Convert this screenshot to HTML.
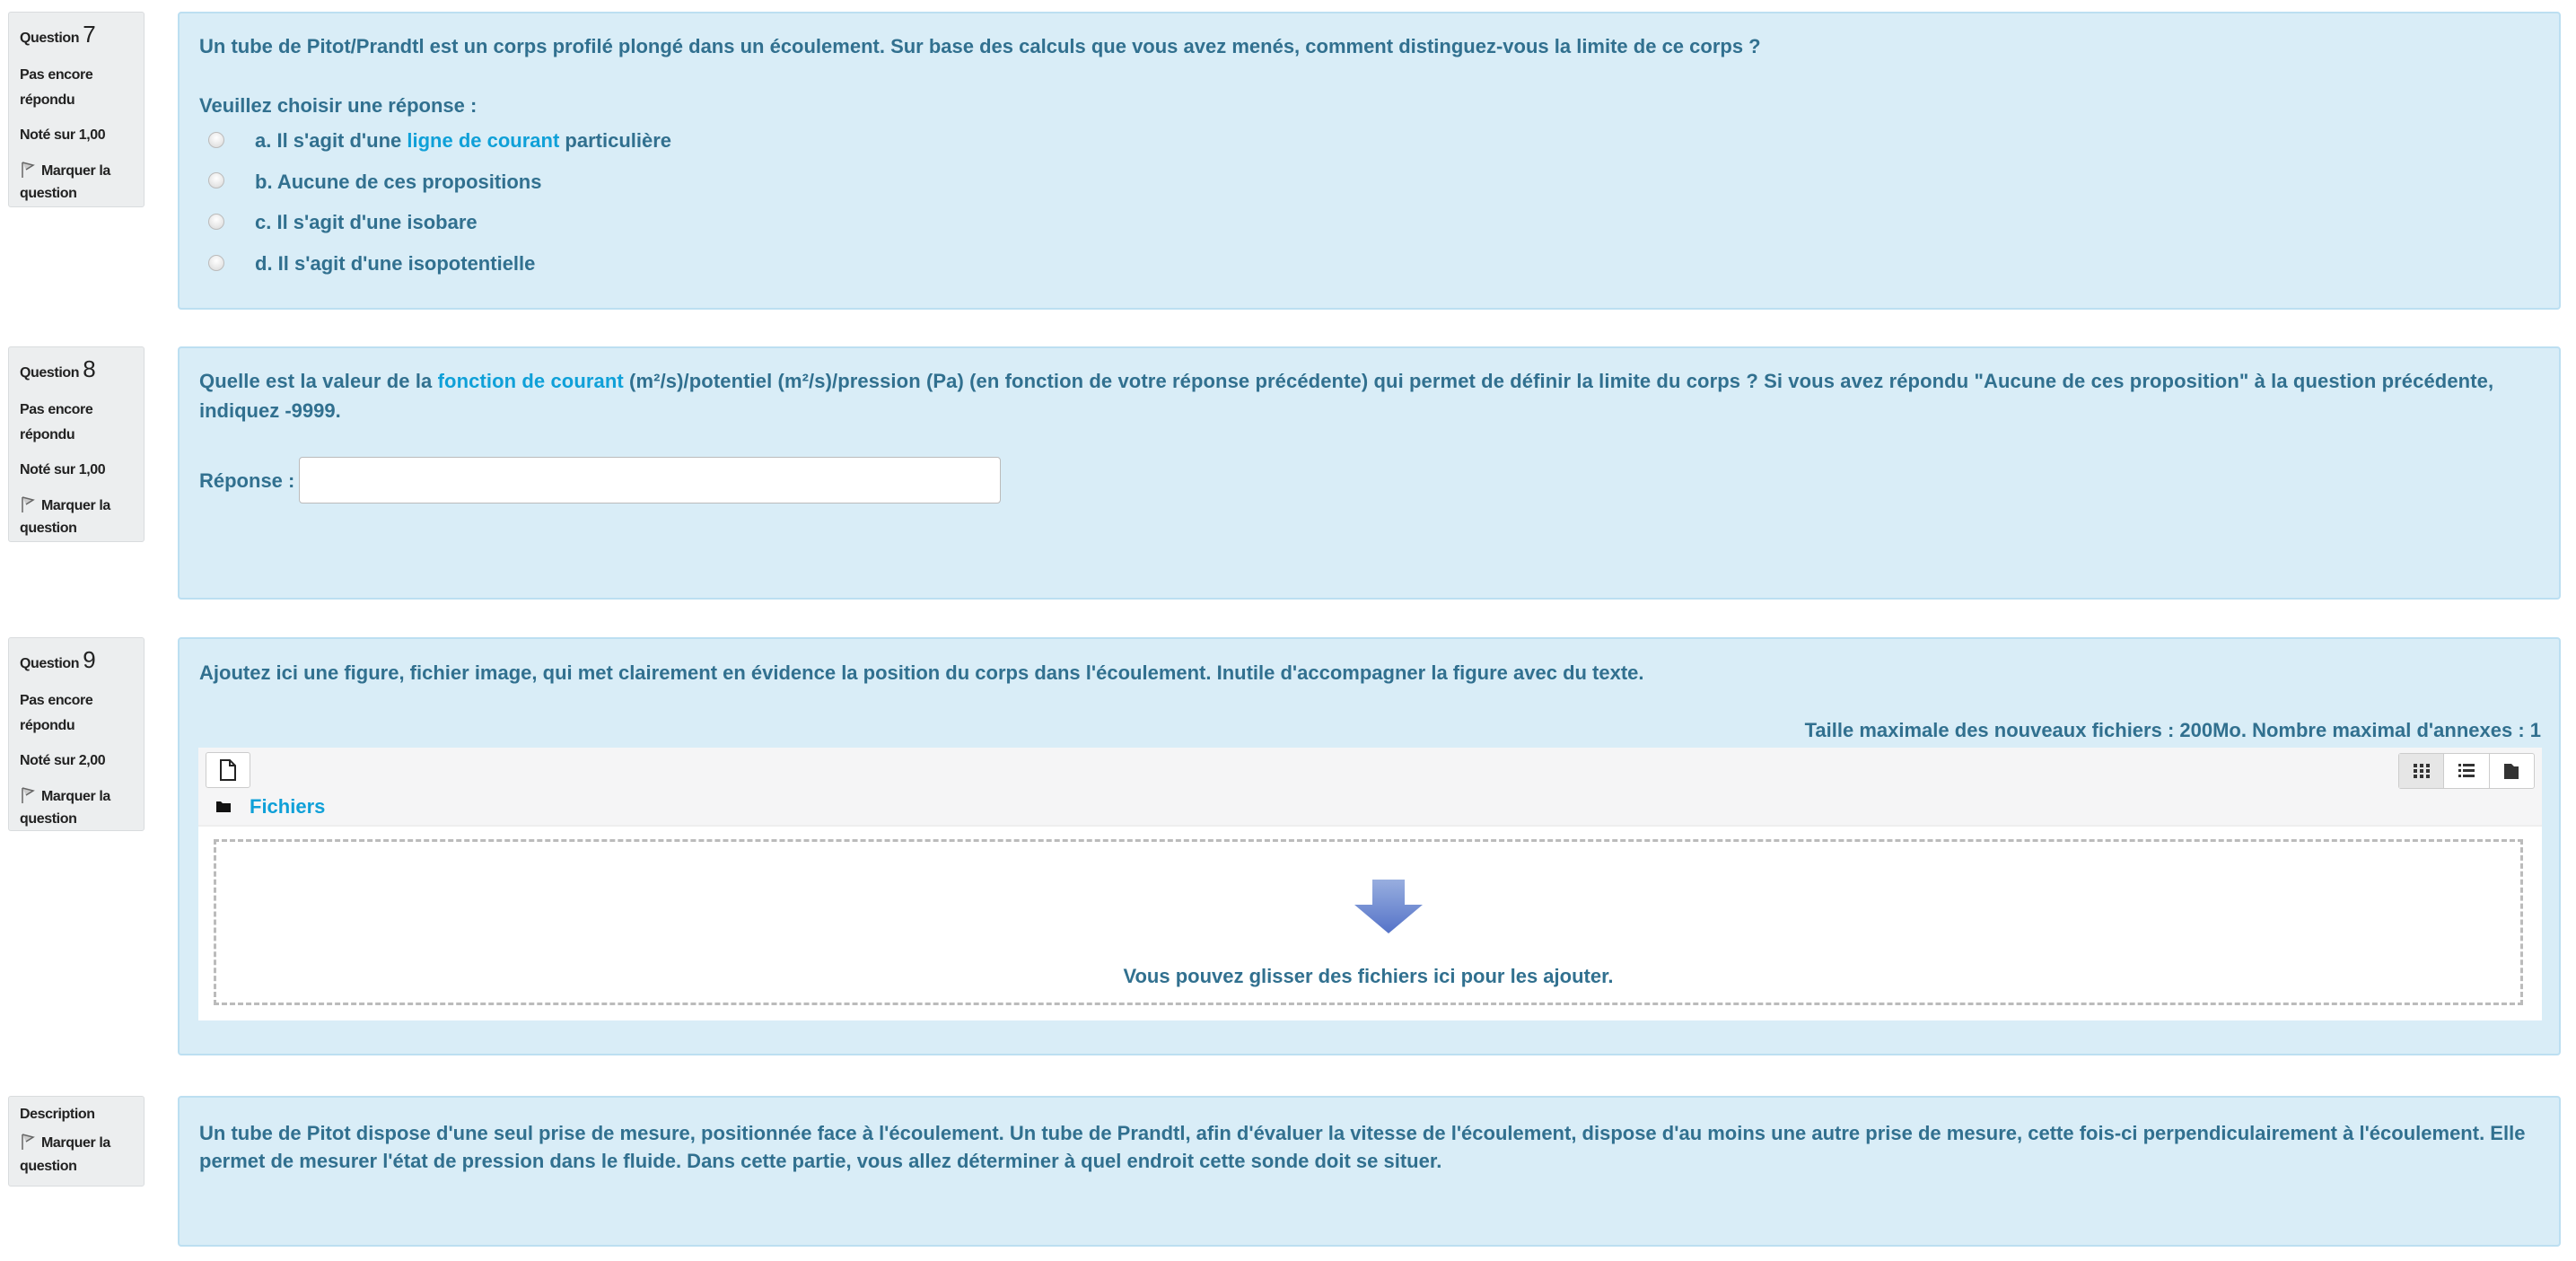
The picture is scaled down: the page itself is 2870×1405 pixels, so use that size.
<!DOCTYPE html>
<html><head><meta charset="utf-8"><style>
body{margin:0;width:2870px;height:1405px;background:#fff;font-family:"Liberation Sans",Arial,sans-serif;position:relative;overflow:hidden}
.info{position:absolute;left:9px;width:152px;background:#eceeef;border:1px solid #d9dcde;border-radius:3px;font-size:16px;font-weight:bold;color:#222;box-sizing:border-box;letter-spacing:-0.4px}
.info div{position:absolute;left:12px;white-space:nowrap;line-height:20px}
.info .n{font-size:26px;font-weight:normal}
.flag{display:inline-block;width:18px;height:20px;vertical-align:-4px;margin-right:6px}
.panel{position:absolute;left:198px;width:2655px;background:#d9edf7;border:2px solid #bcdff1;border-radius:4px;box-sizing:border-box;color:#31708f;font-weight:bold;font-size:22px}
.t{position:absolute;left:22px;white-space:nowrap}
a{color:#0fa0d8;text-decoration:none}
.radio{position:absolute;width:18px;height:18px;border-radius:50%;background:radial-gradient(circle at 50% 35%,#fff,#d8d8d8);border:1px solid #bbb;box-sizing:border-box}
</style></head><body>

<div class="info" style="top:13px;height:218px"><div style="top:14px">Question <span class="n">7</span></div><div style="top:60px">Pas encore</div><div style="top:88px">répondu</div><div style="top:127px">Noté sur 1,00</div><div style="top:165px"><svg class="flag" viewBox="0 0 18 20"><path d="M3 2v17M3 2l12 3-8 5" fill="#ccc" stroke="#666" stroke-width="1.5"/></svg>Marquer la</div><div style="top:192px">question</div></div>
<div class="panel" style="top:13px;height:332px">
<div class="t" style="top:24px">Un tube de Pitot/Prandtl est un corps profilé plongé dans un écoulement. Sur base des calculs que vous avez menés, comment distinguez-vous la limite de ce corps ?</div>
<div class="t" style="top:90px">Veuillez choisir une réponse :</div>
<div class="radio" style="left:32px;top:132px"></div><div class="t" style="left:84px;top:129px">a. Il s'agit d'une <a>ligne de courant</a> particulière</div>
<div class="radio" style="left:32px;top:177px"></div><div class="t" style="left:84px;top:175px">b. Aucune de ces propositions</div>
<div class="radio" style="left:32px;top:223px"></div><div class="t" style="left:84px;top:220px">c. Il s'agit d'une isobare</div>
<div class="radio" style="left:32px;top:269px"></div><div class="t" style="left:84px;top:266px">d. Il s'agit d'une isopotentielle</div>
</div>

<div class="info" style="top:386px;height:218px"><div style="top:14px">Question <span class="n">8</span></div><div style="top:60px">Pas encore</div><div style="top:88px">répondu</div><div style="top:127px">Noté sur 1,00</div><div style="top:165px"><svg class="flag" viewBox="0 0 18 20"><path d="M3 2v17M3 2l12 3-8 5" fill="#ccc" stroke="#666" stroke-width="1.5"/></svg>Marquer la</div><div style="top:192px">question</div></div>
<div class="panel" style="top:386px;height:282px">
<div class="t" style="top:24px;letter-spacing:0.1px">Quelle est la valeur de la <a>fonction de courant</a> (m²/s)/potentiel (m²/s)/pression (Pa) (en fonction de votre réponse précédente) qui permet de définir la limite du corps ? Si vous avez répondu "Aucune de ces proposition" à la question précédente,</div>
<div class="t" style="top:57px">indiquez -9999.</div>
<div class="t" style="top:135px">Réponse :</div>
<div style="position:absolute;left:133px;top:121px;width:780px;height:50px;background:#fff;border:1px solid #bbb;border-radius:4px"></div>
</div>

<div class="info" style="top:710px;height:216px"><div style="top:14px">Question <span class="n">9</span></div><div style="top:60px">Pas encore</div><div style="top:88px">répondu</div><div style="top:127px">Noté sur 2,00</div><div style="top:165px"><svg class="flag" viewBox="0 0 18 20"><path d="M3 2v17M3 2l12 3-8 5" fill="#ccc" stroke="#666" stroke-width="1.5"/></svg>Marquer la</div><div style="top:192px">question</div></div>
<div class="panel" style="top:710px;height:466px">
<div class="t" style="top:25px">Ajoutez ici une figure, fichier image, qui met clairement en évidence la position du corps dans l'écoulement. Inutile d'accompagner la figure avec du texte.</div>
<div class="t" style="top:89px;left:auto;right:20px">Taille maximale des nouveaux fichiers : 200Mo. Nombre maximal d'annexes : 1</div>
<div style="position:absolute;left:21px;top:121px;width:2611px;height:304px;background:#fff">
 <div style="height:86px;background:#f5f5f6;border-bottom:2px solid #eee;position:relative">
  <div style="position:absolute;left:8px;top:5px;width:48px;height:38px;border:1px solid #ccc;border-radius:3px;background:#fff"><svg width="48" height="38" viewBox="0 0 48 38"><path d="M16 8h10l6 6v16H16z M26 8v6h6" fill="#fff" stroke="#222" stroke-width="2"/></svg></div>
  <svg style="position:absolute;left:20px;top:58px" width="16" height="14"><path d="M0 2h5l2 2h9v10H0z" fill="#111"/></svg>
  <div style="position:absolute;left:57px;top:53px;color:#0fa0d8">Fichiers</div>
  <div style="position:absolute;right:8px;top:6px;width:150px;height:38px;border:1px solid #ccc;border-radius:3px;background:#fff;display:flex">
   <div style="width:50px;background:#e6e6e6;border-right:1px solid #ccc;display:flex;align-items:center;justify-content:center"><svg width="18" height="16"><g fill="#333"><rect x="0" y="0" width="4" height="4"/><rect x="7" y="0" width="4" height="4"/><rect x="14" y="0" width="4" height="4"/><rect x="0" y="6" width="4" height="4"/><rect x="7" y="6" width="4" height="4"/><rect x="14" y="6" width="4" height="4"/><rect x="0" y="12" width="4" height="4"/><rect x="7" y="12" width="4" height="4"/><rect x="14" y="12" width="4" height="4"/></g></svg></div>
   <div style="width:50px;border-right:1px solid #ccc;display:flex;align-items:center;justify-content:center"><svg width="18" height="16"><g fill="#333"><rect x="0" y="0" width="3" height="3"/><rect x="5" y="0" width="13" height="3"/><rect x="0" y="6" width="3" height="3"/><rect x="5" y="6" width="13" height="3"/><rect x="0" y="12" width="3" height="3"/><rect x="5" y="12" width="13" height="3"/></g></svg></div>
   <div style="width:50px;display:flex;align-items:center;justify-content:center"><svg width="16" height="18"><path d="M0 1h8l3 3h5v14H0z" fill="#333"/></svg></div>
  </div>
 </div>
 <div style="position:absolute;left:17px;top:102px;width:2573px;height:185px;border:3px dashed #bbb;box-sizing:border-box">
  <svg style="position:absolute;left:1266px;top:40px" width="80" height="66" viewBox="0 0 80 66"><defs><linearGradient id="g" x1="0" y1="0" x2="0" y2="1"><stop offset="0" stop-color="#98aedf"/><stop offset="1" stop-color="#5573c8"/></linearGradient></defs><path d="M22 2h36v28h20L40 62 2 30h20z" fill="url(#g)"/></svg>
  <div style="position:absolute;left:0;right:0;top:137px;text-align:center">Vous pouvez glisser des fichiers ici pour les ajouter.</div>
 </div>
</div>
</div>

<div class="info" style="top:1221px;height:101px"><div style="top:10px">Description</div><div style="top:40px"><svg class="flag" viewBox="0 0 18 20"><path d="M3 2v17M3 2l12 3-8 5" fill="#ccc" stroke="#666" stroke-width="1.5"/></svg>Marquer la</div><div style="top:68px">question</div></div>
<div class="panel" style="top:1221px;height:168px">
<div class="t" style="top:27px">Un tube de Pitot dispose d'une seul prise de mesure, positionnée face à l'écoulement. Un tube de Prandtl, afin d'évaluer la vitesse de l'écoulement, dispose d'au moins une autre prise de mesure, cette fois-ci perpendiculairement à l'écoulement. Elle</div>
<div class="t" style="top:58px">permet de mesurer l'état de pression dans le fluide. Dans cette partie, vous allez déterminer à quel endroit cette sonde doit se situer.</div>
</div>
</body></html>
